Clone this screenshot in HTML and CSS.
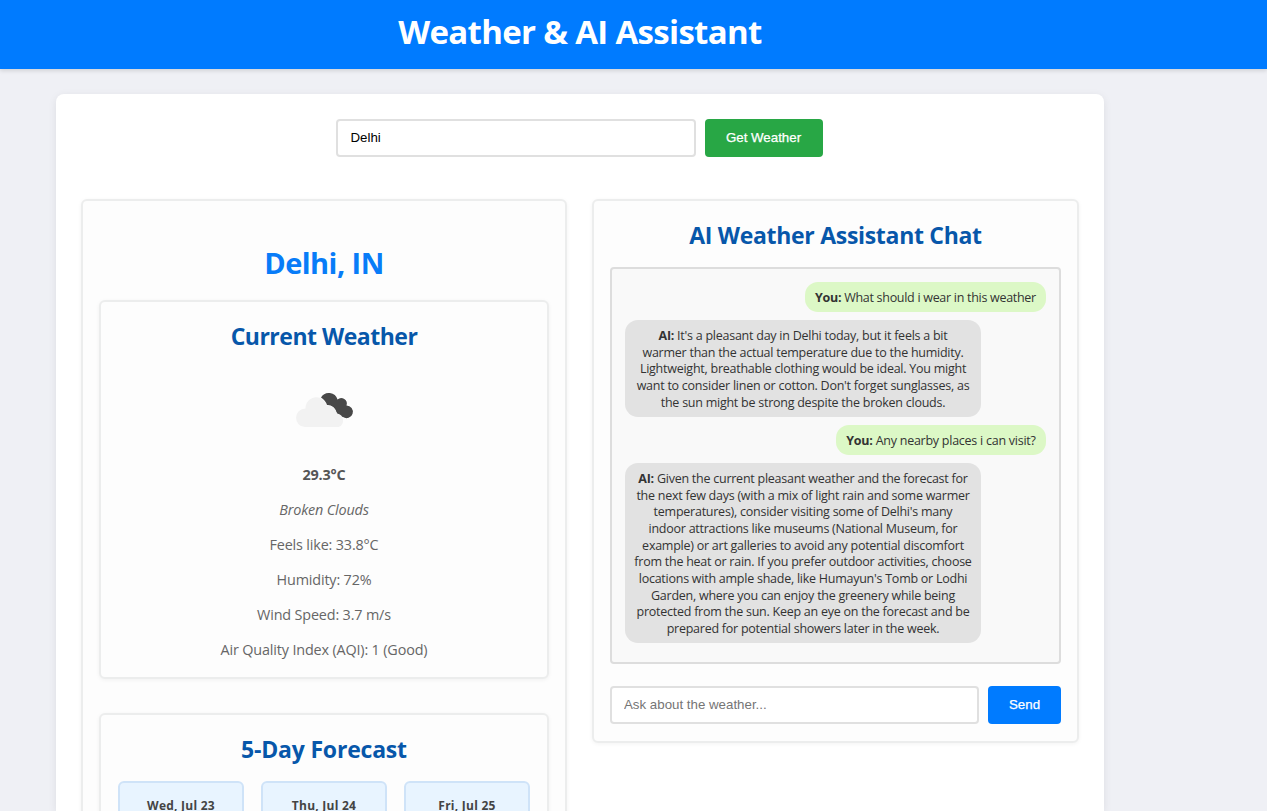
FILE: index.html
```
<!DOCTYPE html>
<html lang="en">
<head>
<meta charset="utf-8">
<title>Weather &amp; AI Assistant</title>
<link rel="stylesheet" href="styles.css">
</head>
<body>
<header class="header"><h1 class="header-title">Weather &amp; AI Assistant</h1></header>
<main class="container">
  <form class="search">
    <input class="field search-field" type="text" value="Delhi" aria-label="City">
    <button class="button button-green" type="button">Get Weather</button>
  </form>
  <div class="columns">
    <section class="card weather">
      <h2 class="city">Delhi, IN</h2>
      <section class="card current">
        <h3 class="heading heading-current">Current Weather</h3>
        <svg class="weather-icon" viewBox="0 0 100 70" width="100" height="70" aria-hidden="true">
          <path fill="#484848" d="M41 23.500A9 9 0 0 1 57.500 25.500A5.600 5.600 0 0 1 66.500 31.500A6.300 6.300 0 1 1 63 43A9 9 0 0 1 56.500 38.500A9 9 0 0 0 47 31A14 14 0 0 0 41 23.500Z"/>
          <path fill="#f2f2f2" d="M25 53A9.200 9.200 0 0 1 25.500 34.600A11 11 0 0 1 40.500 24A14 14 0 0 1 46.500 31.500A10 10 0 0 1 57 39.500A7 7 0 0 1 58.500 53Z"/>
        </svg>
        <p class="stat stat-temp">29.3°C</p>
        <p class="stat stat-sky">Broken Clouds</p>
        <p class="stat">Feels like: 33.8°C</p>
        <p class="stat">Humidity: 72%</p>
        <p class="stat">Wind Speed: 3.7 m/s</p>
        <p class="stat">Air Quality Index (AQI): 1 (Good)</p>
      </section>
      <section class="card forecast">
        <h3 class="heading heading-forecast">5-Day Forecast</h3>
        <div class="days">
          <div class="day">Wed, Jul 23</div>
          <div class="day">Thu, Jul 24</div>
          <div class="day">Fri, Jul 25</div>
        </div>
      </section>
    </section>
    <section class="card chat">
      <h2 class="heading">AI Weather Assistant Chat</h2>
      <div class="messages">
        <div class="bubble user user-first"><b>You:</b> What should i wear in this weather</div>
        <div class="bubble ai"><b>AI:</b> It's a pleasant day in Delhi today, but it feels a bit<br>warmer than the actual temperature due to the humidity.<br>Lightweight, breathable clothing would be ideal. You might<br>want to consider linen or cotton. Don't forget sunglasses, as<br>the sun might be strong despite the broken clouds.</div>
        <div class="bubble user user-second"><b>You:</b> Any nearby places i can visit?</div>
        <div class="bubble ai"><b>AI:</b> Given the current pleasant weather and the forecast for<br>the next few days (with a mix of light rain and some warmer<br>temperatures), consider visiting some of Delhi's many<br>indoor attractions like museums (National Museum, for<br>example) or art galleries to avoid any potential discomfort<br>from the heat or rain. If you prefer outdoor activities, choose<br>locations with ample shade, like Humayun's Tomb or Lodhi<br>Garden, where you can enjoy the greenery while being<br>protected from the sun. Keep an eye on the forecast and be<br>prepared for potential showers later in the week.</div>
      </div>
      <form class="ask">
        <input class="field ask-field" type="text" placeholder="Ask about the weather..." aria-label="Question">
        <button class="button button-blue" type="button">Send</button>
      </form>
    </section>
  </div>
</main>
</body>
</html>
```
FILE: styles.css
```
* { box-sizing: border-box; }
html { height: 100%; overflow: hidden; }
body {
  margin: 0;
  height: 811px;
  overflow: hidden;
  background: #eff0f5;
  color: #333;
  font-family: "Segoe UI", "Open Sans", "Noto Sans", sans-serif;
  text-align: center;
}
h1, h2, h3, p { margin: 0; }
.header {
  height: 69px;
  padding: 10px 107px 0 0;
  background: #007bff;
  box-shadow: 0 2px 4px rgba(0, 0, 0, .12);
}
.header-title {
  font-size: 33px;
  line-height: 44px;
  font-weight: 700;
  letter-spacing: -.68px;
  color: #fff;
}
.container {
  width: 1048px;
  height: 717px;
  overflow: hidden;
  margin: 25px 0 0 56px;
  padding: 25px 25px 0;
  border-radius: 8px 8px 0 0;
  background: #fff;
  box-shadow: 0 2px 8px rgba(0, 0, 0, .08);
}
.search { display: flex; justify-content: center; gap: 9px; height: 38px; padding-right: 2px; }
.field {
  height: 38px;
  padding: 0 13px 2px;
  border: 2px solid #e0e0e0;
  border-radius: 4px;
  background: #fff;
  font: 13.300px "Liberation Sans", Arial, sans-serif;
  color: #000;
}
.field::placeholder { color: #757575; opacity: 1; }
.search-field { width: 360px; }
.button {
  height: 38px;
  padding: 0 0 2px;
  border: 0;
  border-radius: 4px;
  color: #fff;
  font: 13.300px "Liberation Sans", Arial, sans-serif;
  -webkit-text-stroke: .25px #fff;
}
.button-green { width: 118px; background: #28a745; }
.button-blue { width: 73px; background: #007bff; }
.columns { display: flex; align-items: flex-start; gap: 25px; margin-top: 42px; }
.card {
  border: 2px solid #eceded;
  border-radius: 6px;
  background: #fdfdfd;
  box-shadow: 0 1px 4px rgba(0, 0, 0, .05);
}
.weather { width: 486px; height: 760px; padding: 40px 16px 0 16px; }
.city {
  height: 59px;
  line-height: 44px;
  font-size: 29px;
  font-weight: 700;
  letter-spacing: -.55px;
  color: #087cf8;
}
.current { height: 379px; }
.heading {
  line-height: 32px;
  font-size: 23px;
  font-weight: 700;
  letter-spacing: -.3px;
  color: #0757aa;
}
.heading-current { padding-top: 18px; letter-spacing: -.5px; }
.weather-icon { display: block; margin: 22px 0 0 179px; }
.current .stat-temp { margin-top: 13px; }
.stat { height: 35px; line-height: 35px; font-size: 14.400px; letter-spacing: -.16px; color: #666; }
.stat-temp { font-weight: 700; color: #555; }
.stat-sky { font-style: italic; }
.forecast { height: 300px; margin-top: 34px; padding: 18px 16px; }
.heading-forecast { letter-spacing: -.2px; }
.days { display: grid; grid-template-columns: repeat(3, 126px); gap: 17px; margin: 16px 0 0 1px; }
.day {
  height: 160px;
  padding-top: 15px;
  border: 2px solid #cfe3f8;
  border-radius: 6px;
  background: #e8f4ff;
  color: #444;
  font-size: 12px;
  font-weight: 700;
  letter-spacing: .25px;
  line-height: 16px;
}
.chat { width: 487px; height: 544px; padding: 18px 16px; }
.messages {
  display: flex;
  flex-direction: column;
  gap: 8.300px;
  height: 397px;
  margin-top: 16px;
  padding: 13px;
  border: 2px solid #ddd;
  border-radius: 4px;
  background: #f9f9f9;
}
.bubble {
  padding: 7.900px 9px 5.300px;
  border-radius: 13px;
  font-size: 12.500px;
  line-height: 16.650px;
  letter-spacing: -.25px;
  white-space: nowrap;
}
.user { align-self: flex-end; background: #dcf8c6; }
.user-first { width: 241px; letter-spacing: -.29px; }
.user-second { width: 210px; }
.ai { align-self: flex-start; width: 356px; background: #e2e2e2; }
.ask { display: flex; gap: 9px; margin-top: 22px; }
.ask-field { width: 369px; padding-left: 12px; }
```
